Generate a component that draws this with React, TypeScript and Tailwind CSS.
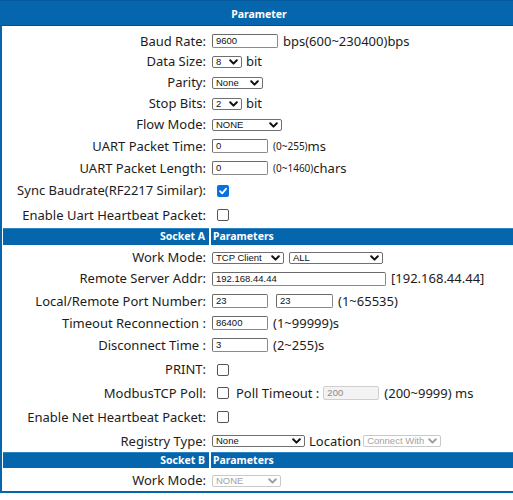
import React from "react";

const LABEL_FONT = { fontFamily: '"Noto Sans", "DejaVu Sans", sans-serif' };

function Chevron({ disabled }: { disabled?: boolean }) {
  return (
    <svg width="9" height="6" viewBox="0 0 9 6" className="shrink-0">
      <path
        d="M1.2 1.2 L4.5 4.6 L7.8 1.2"
        fill="none"
        stroke={disabled ? "#a0a0a0" : "#111"}
        strokeWidth="2"
        strokeLinecap="round"
        strokeLinejoin="round"
      />
    </svg>
  );
}

function Sel({ cls, text, disabled }: { cls: string; text: string; disabled?: boolean }) {
  return (
    <div
      className={`flex items-center justify-between h-[12px] rounded-[2px] border pl-[3px] pr-[3px] text-[9.5px] leading-none ${
        disabled ? "border-[#c9c9c9] text-[#a3a3a3] bg-white" : "border-[#6f6f6f] text-[#111] bg-white"
      } ${cls}`}
      style={{ fontFamily: '"Liberation Sans", Arial, sans-serif' }}
    >
      <span className="whitespace-nowrap">{text}</span>
      <Chevron disabled={disabled} />
    </div>
  );
}

function Inp({ cls, text, disabled }: { cls: string; text: string; disabled?: boolean }) {
  return (
    <div
      className={`flex items-center h-[14px] rounded-[2px] border pl-[3px] text-[9.5px] leading-none ${
        disabled ? "border-[#cfcfcf] bg-[#f3f3f3] text-[#8a8a8a]" : "border-[#8a8a8a] border-t-[#6a6a6a] border-l-[#6a6a6a] bg-white text-[#111]"
      } ${cls}`}
      style={{ fontFamily: '"Liberation Sans", Arial, sans-serif' }}
    >
      {text}
    </div>
  );
}

function Check({ checked }: { checked?: boolean }) {
  if (checked) {
    return (
      <div className="ml-[5px] flex h-[12px] w-[12px] items-center justify-center rounded-[2px] bg-[#0b6fe0]">
        <svg width="10" height="10" viewBox="0 0 10 10">
          <path d="M2 5.2 L4.2 7.4 L8.2 2.6" fill="none" stroke="#fff" strokeWidth="1.7" strokeLinecap="round" strokeLinejoin="round" />
        </svg>
      </div>
    );
  }
  return <div className="ml-[5px] h-[12px] w-[12px] rounded-[2px] border border-[#555] bg-white" />;
}

function Row({ h, label, children }: { h: string; label: string; children?: React.ReactNode }) {
  return (
    <div className={`flex items-center ${h}`}>
      <div className="w-[209px] shrink-0 whitespace-nowrap pr-[5px] text-right text-[13px] leading-none text-[#1c1c1c]" style={LABEL_FONT}>
        {label}
      </div>
      <div className="flex items-center whitespace-nowrap pl-[1px] text-[13px] leading-none text-[#1c1c1c]" style={LABEL_FONT}>
        {children}
      </div>
    </div>
  );
}

function Bar({ h, left }: { h: string; left: string }) {
  return (
    <div className={`flex ${h} gap-[2px] pl-[1px]`}>
      <div
        className="flex w-[206px] shrink-0 items-center justify-end border-t border-[#2d83c4] bg-[#0566ad] pr-[4px] text-[10.5px] font-bold text-white"
        style={LABEL_FONT}
      >
        {left}
      </div>
      <div
        className="flex flex-1 items-center border-t border-[#2d83c4] bg-[#0566ad] pl-[2px] text-[10.5px] font-bold text-white"
        style={LABEL_FONT}
      >
        Parameters
      </div>
    </div>
  );
}

const small = "text-[10px]";

export default function App() {
  return (
    <div className="h-[500px] w-[513px] overflow-hidden bg-white">
      <div
        className="flex h-[26px] items-center justify-center border-t border-b border-t-[#035a9c] border-b-[#034f8c] bg-[#0566ad] pl-[5px] pt-[4px] text-[10.5px] font-bold text-white"
        style={LABEL_FONT}
      >
        Parameter
      </div>
      <div className="border-b-2 border-l-2 border-[#0566ad] pt-[5px]">
        <Row h="h-[20px]" label="Baud Rate:">
          <Inp cls="w-[66px]" text="9600" />
          <span className="ml-[5px]">bps(600~230400)bps</span>
        </Row>
        <Row h="h-[21px]" label="Data Size:">
          <Sel cls="w-[30px]" text="8" />
          <span className="ml-[4px]">bit</span>
        </Row>
        <Row h="h-[21px]" label="Parity:">
          <Sel cls="w-[51px]" text="None" />
        </Row>
        <Row h="h-[21px]" label="Stop Bits:">
          <Sel cls="w-[30px]" text="2" />
          <span className="ml-[4px]">bit</span>
        </Row>
        <Row h="h-[21px]" label="Flow Mode:">
          <Sel cls="w-[70px]" text="NONE" />
        </Row>
        <Row h="h-[22px]" label="UART Packet Time:">
          <Inp cls="w-[56px]" text="0" />
          <span className={`ml-[5px] ${small}`}>(0~255)</span>
          <span>ms</span>
        </Row>
        <Row h="h-[22px]" label="UART Packet Length:">
          <Inp cls="w-[56px]" text="0" />
          <span className={`ml-[5px] ${small}`}>(0~1460)</span>
          <span>chars</span>
        </Row>
        <Row h="h-[23px]" label="Sync Baudrate(RF2217 Similar):">
          <Check checked />
        </Row>
        <Row h="h-[26px]" label="Enable Uart Heartbeat Packet:">
          <Check />
        </Row>
        <Bar h="h-[17px]" left="Socket A" />
        <div className="h-[2px]" />
        <Row h="h-[21px]" label="Work Mode:">
          <Sel cls="w-[72px]" text="TCP Client" />
          <Sel cls="ml-[5px] w-[94px]" text="ALL" />
        </Row>
        <Row h="h-[21px]" label="Remote Server Addr:">
          <Inp cls="w-[174px]" text="192.168.44.44" />
          <span className="ml-[5px]">[192.168.44.44]</span>
        </Row>
        <Row h="h-[24px]" label="Local/Remote Port Number:">
          <Inp cls="w-[56px]" text="23" />
          <Inp cls="ml-[8px] w-[57px]" text="23" />
          <span className="ml-[5px]">(1~65535)</span>
        </Row>
        <Row h="h-[20px]" label="Timeout Reconnection :">
          <Inp cls="w-[56px]" text="86400" />
          <span className="ml-[5px]">(1~99999)s</span>
        </Row>
        <Row h="h-[24px]" label="Disconnect Time :">
          <Inp cls="w-[56px]" text="3" />
          <span className="ml-[5px]">(2~255)s</span>
        </Row>
        <Row h="h-[25px]" label="PRINT:">
          <Check />
        </Row>
        <Row h="h-[22px]" label="ModbusTCP Poll:">
          <Check />
          <span className="ml-[7px]">Poll Timeout :</span>
          <Inp cls="ml-[4px] w-[56px]" text="200" disabled />
          <span className="ml-[5px]">(200~9999) ms</span>
        </Row>
        <Row h="h-[26px]" label="Enable Net Heartbeat Packet:">
          <Check />
        </Row>
        <Row h="h-[22px]" label="Registry Type:">
          <Sel cls="w-[93px]" text="None" />
          <span className="ml-[4px]">Location</span>
          <Sel cls="ml-[2px] w-[78px]" text="Connect With" disabled />
        </Row>
        <Bar h="h-[16px]" left="Socket B" />
        <div className="h-[2px]" />
        <Row h="h-[21px]" label="Work Mode:">
          <Sel cls="w-[69px]" text="NONE" disabled />
        </Row>
      </div>
    </div>
  );
}
